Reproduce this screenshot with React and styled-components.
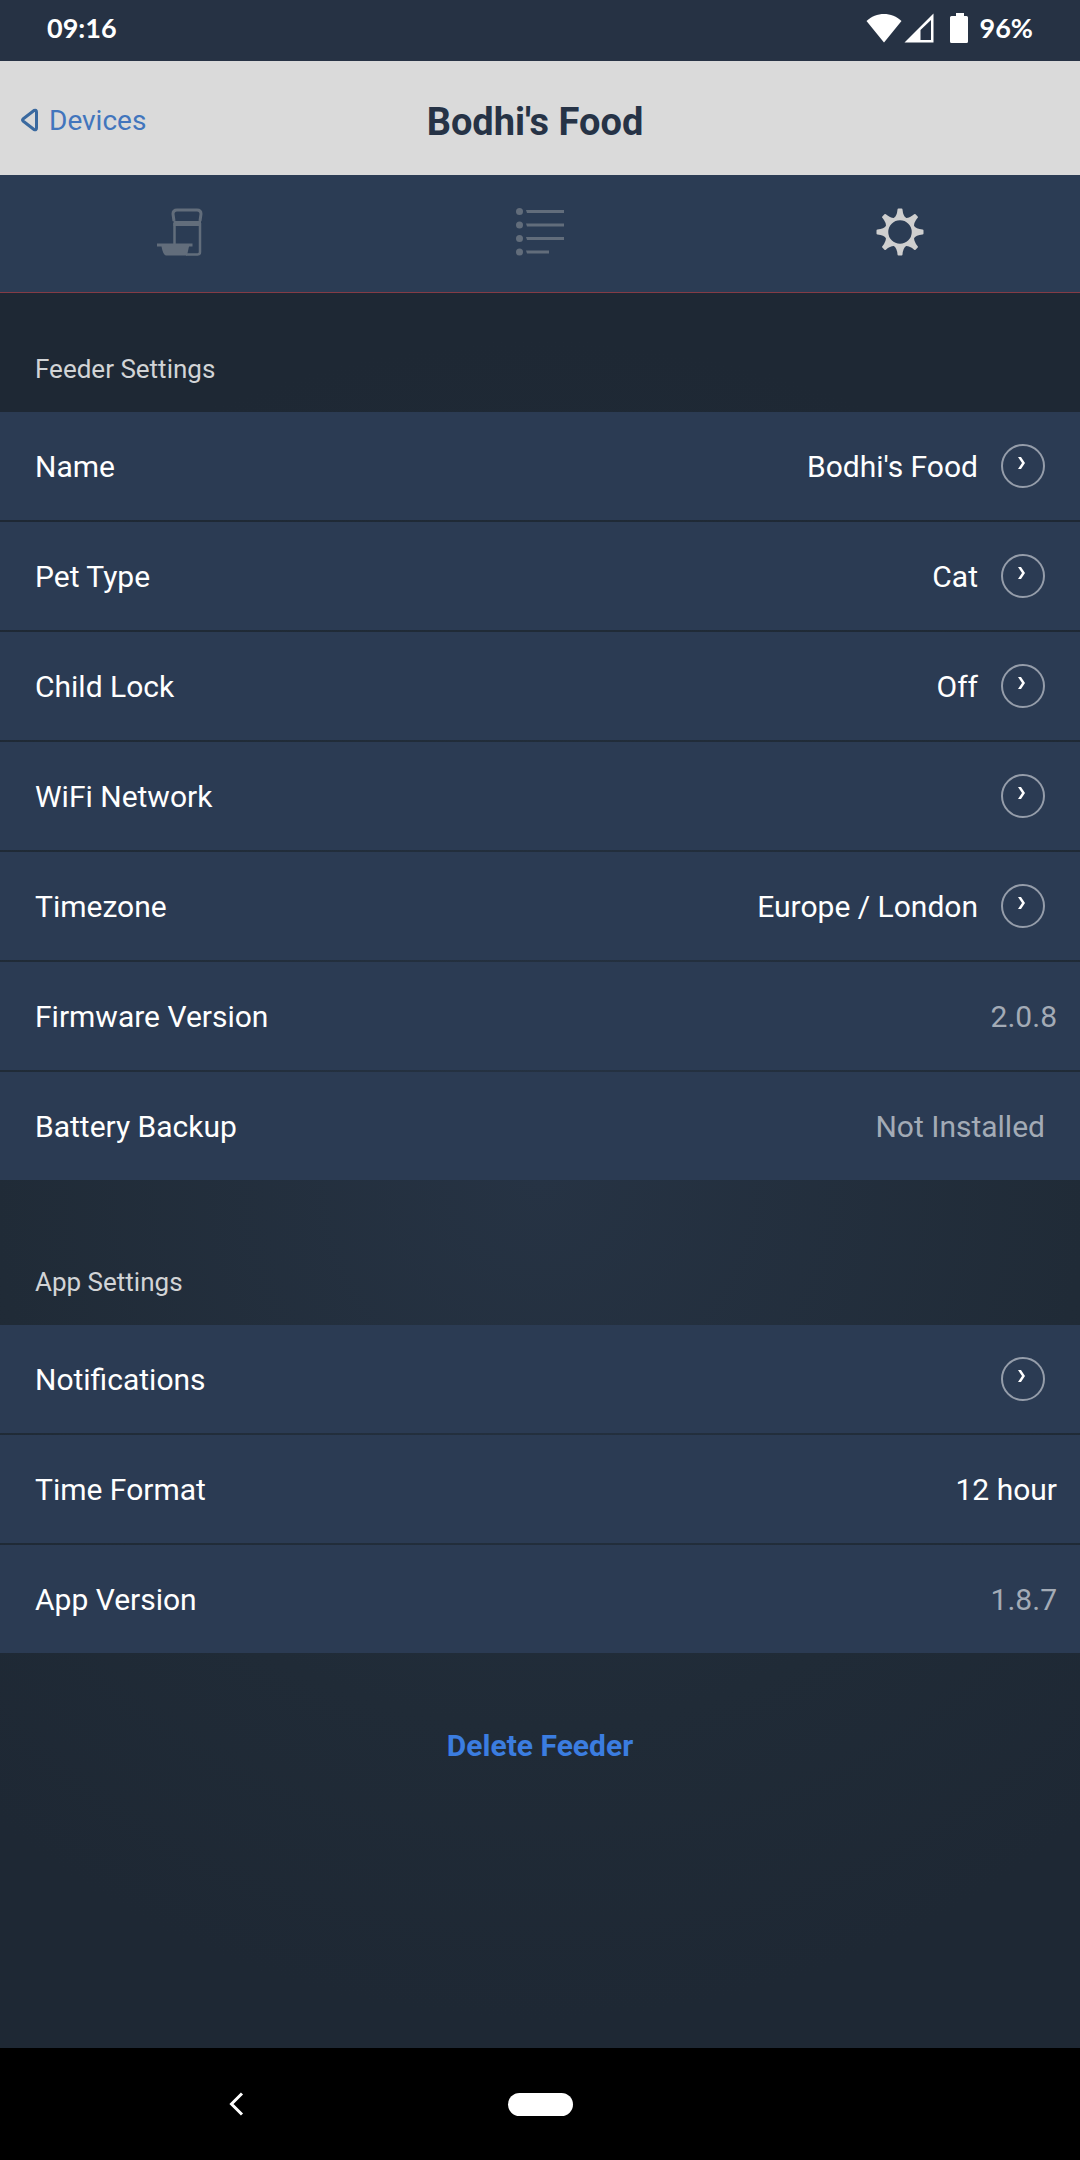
import React from 'react';
import styled, { createGlobalStyle } from 'styled-components';

const GlobalStyle = createGlobalStyle`
  * {
    box-sizing: border-box;
  }
  body {
    margin: 0;
    background: #1e2834;
    font-family: Roboto, 'Liberation Sans', sans-serif;
  }
`;

const Screen = styled.div`
  display: flex;
  flex-direction: column;
  min-height: 100vh;
  background: radial-gradient(circle 840px at 50% 1180px, #263344 0%, #202b37 65%, #1e2834 100%);
`;

const StatusBar = styled.div`
  display: flex;
  align-items: center;
  justify-content: space-between;
  height: 61px;
  padding: 0 47px 6px;
  background: #263244;
  color: #fff;
  font-family: Lato, sans-serif;
  font-size: 27px;
  font-weight: 700;
`;

const StatusIcons = styled.div`
  display: flex;
  align-items: center;
`;

const Header = styled.header`
  display: grid;
  grid-template-columns: 1fr auto 1fr;
  align-items: center;
  height: 114px;
  padding: 4px 30px 0 20px;
  background: #dadada;
`;

const BackLink = styled.a`
  display: flex;
  align-items: center;
  gap: 10px;
  color: #4175bd;
  font-size: 28px;
  text-decoration: none;
`;

const Title = styled.h1`
  margin: 4px 0 0;
  color: #263346;
  font-size: 38px;
  font-weight: 700;
`;

const Tabs = styled.nav`
  display: grid;
  grid-template-columns: repeat(3, 1fr);
  height: 118px;
  background: #2b3c54;
  border-bottom: 1px solid #843c46;
`;

const Tab = styled.button`
  display: flex;
  align-items: center;
  justify-content: center;
  padding: 0 0 3px;
  border: 0;
  background: none;
  color: ${({ $active }) => ($active ? '#cfcfcf' : '#626d7b')};
`;

const Content = styled.main`
  flex: 1;
`;

const SectionTitle = styled.h2`
  margin: 0;
  padding: ${({ $first }) => ($first ? '61px' : '87px')} 35px 27px;
  color: #d2d4d6;
  font-size: 26px;
  font-weight: 400;
  line-height: 31px;
`;

const List = styled.div`
  display: flex;
  flex-direction: column;
  gap: 2px;
`;

const Row = styled.div`
  display: flex;
  align-items: center;
  justify-content: space-between;
  width: 100%;
  height: 108px;
  padding: 0 ${({ $wide }) => ($wide ? '23px' : '35px')} 0 35px;
  border: 0;
  background: #2b3b53;
  color: #fff;
  font-family: inherit;
  font-size: 30px;
  text-align: left;
`;

const Value = styled.span`
  display: flex;
  align-items: center;
  gap: 23px;
  color: ${({ $muted }) => ($muted ? '#a3abb6' : '#fff')};
`;

const DeleteButton = styled.button`
  display: block;
  margin: 73px auto 0;
  padding: 0;
  border: 0;
  background: none;
  color: #3b7de0;
  font-family: inherit;
  font-size: 30px;
  font-weight: 700;
  line-height: 40px;
`;

const NavBar = styled.footer`
  display: grid;
  grid-template-columns: 1fr auto 1fr;
  align-items: center;
  height: 112px;
  background: #000;
`;

const NavBack = styled.button`
  justify-self: end;
  display: flex;
  margin-right: 264px;
  padding: 0;
  border: 0;
  background: none;
`;

const HomePill = styled.button`
  width: 65px;
  height: 23px;
  padding: 0;
  border: 0;
  border-radius: 12px;
  background: #fff;
`;

const WifiIcon = () => (
  <svg width="36" height="30" viewBox="0 0 36 30" fill="#fff">
    <path d="M0.500 8C10-1.500 26-1.500 35.500 8L18 29.500Z" />
  </svg>
);

const SignalIcon = () => (
  <svg width="46" height="30" viewBox="0 0 46 30" fill="#fff">
    <path fillRule="evenodd" d="M2.500 29.500L31.500 0.500V29.500ZM18.500 17V27H29V7Z" />
  </svg>
);

const BatteryIcon = () => (
  <svg width="32" height="30" viewBox="0 0 32 30" fill="#fff">
    <path d="M8 0H16V3H18.500Q20 3 20 4.500V28.500Q20 30 18.500 30H3.500Q2 30 2 28.500V4.500Q2 3 3.500 3H8Z" />
  </svg>
);

const BackIcon = () => (
  <svg width="19" height="24" viewBox="0 0 19 24" fill="none" stroke="#3a699f" strokeWidth="3" strokeLinejoin="round">
    <path d="M14 2.500Q16.500 1.500 16.500 4V20Q16.500 22.500 14 21.500L3 13Q2 12 3 11Z" />
  </svg>
);

const FeederIcon = () => (
  <svg width="46" height="48" viewBox="0 0 46 48" fill="none" stroke="currentColor">
    <path d="M17 13L16 6Q16 2 20 2H40Q44 2 44 6L43 13" strokeWidth="3" />
    <path d="M16.500 15.500H44" strokeWidth="5" />
    <path d="M17.500 15V38M43 15V44Q43 46.500 40.500 46.500H29" strokeWidth="2.500" />
    <path d="M0 35.500H35.500V38.500H32L30 47.500H9Q6 47 4.500 38.500H0Z" fill="currentColor" stroke="none" />
  </svg>
);

const ListIcon = () => (
  <svg width="48" height="48" viewBox="0 0 48 48" fill="currentColor">
    <circle cx="3.500" cy="3.500" r="3.500" />
    <circle cx="3.500" cy="17" r="3.500" />
    <circle cx="3.500" cy="30.500" r="3.500" />
    <circle cx="3.500" cy="44" r="3.500" />
    <path d="M10 2H48V5H11ZM10 15.500H48V18.500H11ZM10 29H48V32H11ZM10 42.500H33V45.500H11Z" />
  </svg>
);

const teeth = [0, 45, 90, 135, 180, 225, 270, 315];

const GearIcon = () => (
  <svg width="48" height="48" viewBox="-24 -24 48 48" fill="currentColor">
    <circle r="13.500" fill="none" stroke="currentColor" strokeWidth="3.500" />
    {teeth.map(angle => (
      <path
        key={angle}
        transform={`rotate(${angle})`}
        d="M-6.500-13.500Q-3-16-2.500-22.500Q-2.500-23.500-1.500-23.500H1.500Q2.500-23.500 2.500-22.500Q3-16 6.500-13.500Z"
      />
    ))}
  </svg>
);

const ArrowIcon = () => (
  <svg width="44" height="44" viewBox="0 0 44 44" fill="none">
    <circle cx="22" cy="22" r="21" stroke="#959daa" strokeWidth="2" />
    <path d="M17 13H20L24 19L20 25H17L21 19Z" fill="#fff" />
  </svg>
);

const NavBackIcon = () => (
  <svg width="15" height="24" viewBox="0 0 15 24" fill="none" stroke="#fff" strokeWidth="3">
    <path d="M13 1.500L2.500 12L13 22.500" />
  </svg>
);

const feederSettings = [
  { label: 'Name', value: "Bodhi's Food", link: true },
  { label: 'Pet Type', value: 'Cat', link: true },
  { label: 'Child Lock', value: 'Off', link: true },
  { label: 'WiFi Network', link: true },
  { label: 'Timezone', value: 'Europe / London', link: true },
  { label: 'Firmware Version', value: '2.0.8', muted: true, wide: true },
  { label: 'Battery Backup', value: 'Not Installed', muted: true },
];

const appSettings = [
  { label: 'Notifications', link: true },
  { label: 'Time Format', value: '12 hour', button: true, wide: true },
  { label: 'App Version', value: '1.8.7', muted: true, wide: true },
];

const Settings = ({ items }) => (
  <List>
    {items.map(({ label, value, link, button, muted, wide }) => (
      <Row key={label} as={link || button ? 'button' : 'div'} $wide={wide}>
        <span>{label}</span>
        <Value $muted={muted}>
          {value}
          {link && <ArrowIcon />}
        </Value>
      </Row>
    ))}
  </List>
);

const App = () => (
  <Screen>
    <GlobalStyle />
    <StatusBar>
      <span>09:16</span>
      <StatusIcons>
        <WifiIcon />
        <SignalIcon />
        <BatteryIcon />
        <span>96%</span>
      </StatusIcons>
    </StatusBar>
    <Header>
      <BackLink href="#devices">
        <BackIcon />
        Devices
      </BackLink>
      <Title>Bodhi's Food</Title>
    </Header>
    <Tabs>
      <Tab aria-label="Feeder"><FeederIcon /></Tab>
      <Tab aria-label="History"><ListIcon /></Tab>
      <Tab aria-label="Settings" $active><GearIcon /></Tab>
    </Tabs>
    <Content>
      <SectionTitle $first>Feeder Settings</SectionTitle>
      <Settings items={feederSettings} />
      <SectionTitle>App Settings</SectionTitle>
      <Settings items={appSettings} />
      <DeleteButton>Delete Feeder</DeleteButton>
    </Content>
    <NavBar>
      <NavBack aria-label="Back"><NavBackIcon /></NavBack>
      <HomePill aria-label="Home" />
    </NavBar>
  </Screen>
);

export default App;
